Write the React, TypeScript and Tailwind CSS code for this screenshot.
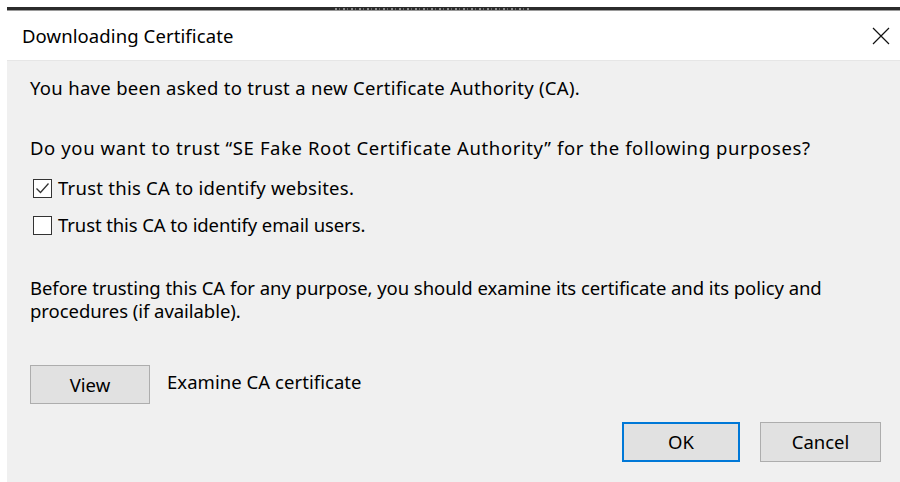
import React from "react";

const font = { fontFamily: '"Noto Sans", "Open Sans", sans-serif' };

function CheckRow({ checked, label, track }: { checked: boolean; label: string; track: string }) {
  return (
    <div className="flex items-center h-[20px]">
      <div className="w-[19px] h-[19px] border border-[#333] bg-white flex items-center justify-center ml-[3px] mr-[6px]">
        {checked && (
          <svg width="15" height="15" viewBox="0 0 15 15">
            <path d="M1.5 7.5 L5.5 11.5 L13.5 2.5" fill="none" stroke="#333" strokeWidth="1.3" />
          </svg>
        )}
      </div>
      <span className={track}>{label}</span>
    </div>
  );
}

export default function App() {
  return (
    <div
      className="w-[900px] h-[482px] bg-white pl-[7px] pt-[7px] flex flex-col text-[18.5px] text-black overflow-hidden"
      style={font}
    >
      {/* window frame edge; a speckled strip where the window behind shows through */}
      <div className="h-[3px] bg-[#2b2b2b] shrink-0 flex">
        <div className="ml-[328px] w-[196px] h-[2px] mt-px bg-[repeating-linear-gradient(90deg,#8a8a8a_0_2px,#2b2b2b_2px_4px,#6a6a6a_4px_5px,#2b2b2b_5px_8px)]" />
      </div>
      <div className="h-px bg-[#9a9a9a] shrink-0" />
      <div className="h-[49px] bg-white flex items-center justify-between pl-[15px] pr-[8px] shrink-0">
        <span className="tracking-[0.1px]">Downloading Certificate</span>
        <svg width="18" height="18" viewBox="0 0 18 18" className="mr-[2px]">
          <path d="M1 1 L17 17 M17 1 L1 17" stroke="#111" strokeWidth="1.2" fill="none" />
        </svg>
      </div>
      <div className="h-px bg-[#e6e6e6] shrink-0" />
      <div className="flex-1 bg-[#f0f0f0] pl-[23px] pr-[19px] flex flex-col">
        <p className="mt-[17px] leading-[20px] tracking-[0.3px]">
          You have been asked to trust a new Certificate Authority (CA).
        </p>
        <p className="mt-[40px] leading-[20px] tracking-[0.6px]">
          Do you want to trust “SE Fake Root Certificate Authority” for the following purposes?
        </p>
        <div className="mt-[20px]">
          <CheckRow checked label="Trust this CA to identify websites." track="tracking-[0.25px]" />
        </div>
        <div className="mt-[17px]">
          <CheckRow checked={false} label="Trust this CA to identify email users." track="tracking-[-0.1px]" />
        </div>
        <p className="mt-[41px] leading-[23px] tracking-[-0.05px] pr-[10px]">
          Before trusting this CA for any purpose, you should examine its certificate and its policy and procedures (if available).
        </p>
        <div className="mt-[43px] flex items-start">
          <button className="w-[120px] h-[39px] bg-[#e1e1e1] border border-[#adadad] flex items-center justify-center">
            View
          </button>
          <span className="ml-[17px] mt-[7px] leading-[20px] tracking-[0.05px]">Examine CA certificate</span>
        </div>
        <div className="mt-[18px] flex justify-end gap-[20px]">
          <button className="w-[118px] h-[40px] bg-[#e1e1e1] border-2 border-[#0078d7] flex items-center justify-center">
            OK
          </button>
          <button className="w-[121px] h-[40px] bg-[#e1e1e1] border border-[#adadad] flex items-center justify-center">
            Cancel
          </button>
        </div>
      </div>
    </div>
  );
}
